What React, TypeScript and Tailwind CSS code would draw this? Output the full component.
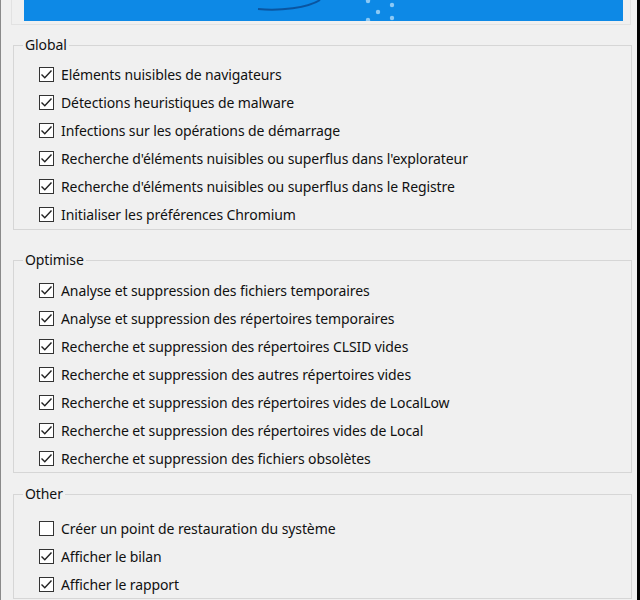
import React from 'react';

const globalItems = [
	"Eléments nuisibles de navigateurs",
	"Détections heuristiques de malware",
	"Infections sur les opérations de démarrage",
	"Recherche d'éléments nuisibles ou superflus dans l'explorateur",
	"Recherche d'éléments nuisibles ou superflus dans le Registre",
	"Initialiser les préférences Chromium",
];

const optimiseItems = [
	"Analyse et suppression des fichiers temporaires",
	"Analyse et suppression des répertoires temporaires",
	"Recherche et suppression des répertoires CLSID vides",
	"Recherche et suppression des autres répertoires vides",
	"Recherche et suppression des répertoires vides de LocalLow",
	"Recherche et suppression des répertoires vides de Local",
	"Recherche et suppression des fichiers obsolètes",
];

const otherItems: [string, boolean][] = [
	["Créer un point de restauration du système", false],
	["Afficher le bilan", true],
	["Afficher le rapport", true],
];

const CheckRow: React.FC<{ label: string; checked?: boolean }> = ({ label, checked = true }) => (
	<div className="flex items-center h-[28px] gap-[7px]">
		<span className="w-[15px] h-[15px] border border-[#333] bg-white flex items-center justify-center shrink-0">
			{checked && (
				<svg width="13" height="13" viewBox="0 0 13 13" fill="none">
					<path d="M1.5 6.5 L4.8 9.8 L11.5 2.5" stroke="#222" strokeWidth="1.4" />
				</svg>
			)}
		</span>
		<span className="whitespace-nowrap">{label}</span>
	</div>
);

// group box with the title sitting on the top edge
const Group: React.FC<{ title: string; className?: string; innerTop: string; children: React.ReactNode }> = ({ title, className, innerTop, children }) => (
	<div className={`ml-[12px] mr-[5px] flex flex-col ${className ?? ''}`}>
		<div className="flex items-center h-[20px]">
			<div className="w-[10px] self-stretch flex flex-col"><div className="h-[10px]" /><div className="flex-1 border-t border-l border-[#d6d6d6]" /></div>
			<span className="px-[2px] leading-[20px]">{title}</span>
			<div className="flex-1 self-stretch flex flex-col"><div className="h-[10px]" /><div className="flex-1 border-t border-r border-[#d6d6d6]" /></div>
		</div>
		<div className={`pl-[25px] border-l border-r border-b border-[#d6d6d6] ${innerTop}`}>{children}</div>
	</div>
);

export default function App() {
	return (
		<div
			className="w-full h-[600px] overflow-hidden bg-[#f0f0f0] text-[#111] text-[14px] tracking-[-0.1px] border-l border-l-[#8a8a8a] border-r-[3px] border-r-black"
			style={{ fontFamily: '"Noto Sans", "Open Sans", sans-serif' }}
		>
			<div className="ml-[10px] mr-[6px] h-[25px] border-l border-r border-b border-[#e2e2e2] pl-[12px] pr-[7px]">
				<div className="h-[21px] bg-[#0d89e6] overflow-hidden">
					<svg width="598" height="21" viewBox="0 0 598 21">
						<path d="M234 9 C256 11 284 8 296 0" stroke="#0a55a0" strokeWidth="2" fill="none" />
						<circle cx="344" cy="1" r="2.2" fill="#8cc9f5" />
						<circle cx="368" cy="5" r="2.2" fill="#8cc9f5" />
						<circle cx="354" cy="12" r="2.2" fill="#8cc9f5" />
						<circle cx="368" cy="18" r="2.2" fill="#8cc9f5" />
						<circle cx="344" cy="20" r="2.2" fill="#8cc9f5" />
					</svg>
				</div>
			</div>

			<Group title="Global" className="mt-[10px]" innerTop="pt-[5px] pb-[1px]">
				{globalItems.map((t) => <CheckRow key={t} label={t} />)}
			</Group>

			<Group title="Optimise" className="mt-[20px]" innerTop="pt-[6px]">
				{optimiseItems.map((t) => <CheckRow key={t} label={t} />)}
			</Group>

			<Group title="Other" className="mt-[11px]" innerTop="pt-[10px]">
				{otherItems.map(([t, c]) => <CheckRow key={t} label={t} checked={c} />)}
			</Group>
		</div>
	);
}
